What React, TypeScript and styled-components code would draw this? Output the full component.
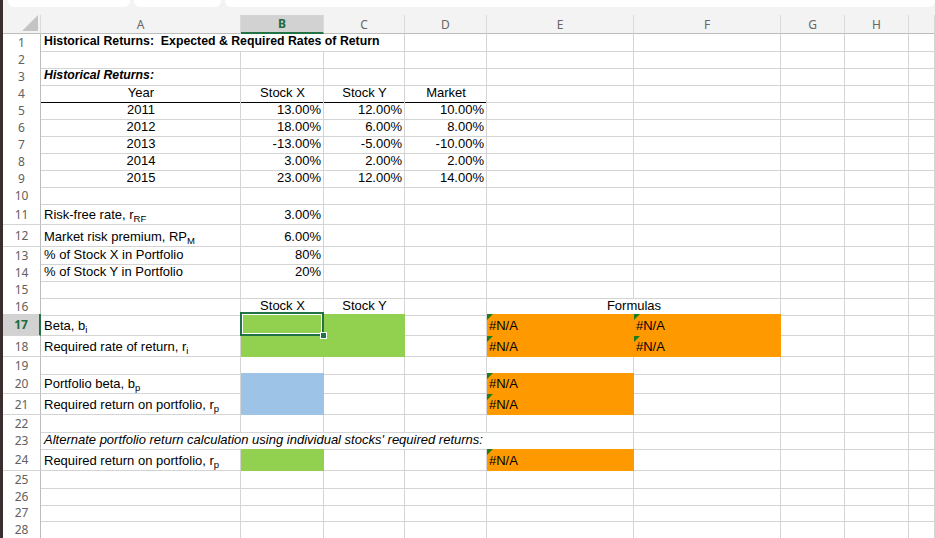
import React from 'react';
import styled, { createGlobalStyle, css } from 'styled-components';

const GRID = '#d4d4d4';
const SEL = '#217346';
const GREEN = '#92d050';
const ORANGE = '#ff9900';
const BLUE = '#9dc3e6';
const COLS = '38px 200px 83px 81px 82px 147px 147px 64px 64px 1fr';

const Global = createGlobalStyle`
  html, body { margin: 0; padding: 0; background: #fff; overflow: hidden; }
  body { font-family: "Liberation Sans", Arial, sans-serif; }
`;

const Window = styled.div`
  display: flex;
  width: 935px;
  height: 538px;
  overflow: hidden;
`;

const Edge = styled.div`
  width: 3px;
  flex: none;
  background: #3b2e2e;
`;

const Sheet = styled.div`
  flex: 1;
  min-width: 0;
  display: flex;
  flex-direction: column;
`;

const TopStrip = styled.div`
  height: 15px;
  flex: none;
  background: #f3f3f3;
  display: flex;
  gap: 4px;
  padding-left: 5px;
  align-items: flex-start;
`;

const Tab = styled.div<{ $w?: number }>`
  height: 7px;
  background: #fff;
  border-radius: 0 0 6px 6px;
  ${p => (p.$w ? css`width: ${p.$w}px; flex: none;` : css`flex: 1;`)}
`;

const HeaderRow = styled.div`
  display: grid;
  grid-template-columns: ${COLS};
  height: 19px;
  flex: none;
  background: #f3f3f3;
`;

const ColHead = styled.div<{ $sel?: boolean }>`
  box-sizing: border-box;
  display: flex;
  align-items: center;
  justify-content: center;
  border-right: 1px solid #dadada;
  border-bottom: 1px solid #bdbdbd;
  font-family: "Noto Sans", "Open Sans", sans-serif;
  font-size: 12px;
  color: #666;
  ${p =>
    p.$sel &&
    css`
      background: #d2d2d2;
      color: #1e6b3f;
      font-weight: bold;
      border-bottom: 2px solid ${SEL};
    `}
`;

const Corner = styled(ColHead)`
  justify-content: flex-end;
  align-items: flex-end;
  padding: 0 2px 2px 0;
`;

const Row = styled.div<{ $h: number }>`
  display: grid;
  grid-template-columns: ${COLS};
  height: ${p => p.$h}px;
  flex: none;
`;

const RowHead = styled.div<{ $sel?: boolean }>`
  box-sizing: border-box;
  display: flex;
  align-items: center;
  justify-content: center;
  border-right: 1px solid #bdbdbd;
  border-bottom: 1px solid ${GRID};
  font-family: "Noto Sans", "Open Sans", sans-serif;
  font-size: 12px;
  color: #616161;
  background: #fff;
  ${p =>
    p.$sel &&
    css`
      background: #d2d2d2;
      color: #1e6b3f;
      font-weight: bold;
      border-right: 2px solid ${SEL};
    `}
`;

type Align = 'l' | 'r' | 'c';

const Cell = styled.div<{
  $a: Align;
  $span: number;
  $fill?: string;
  $b?: boolean;
  $i?: boolean;
  $line?: boolean;
  $sz?: number;
  $err?: boolean;
  $sel?: boolean;
}>`
  grid-column: span ${p => p.$span};
  position: relative;
  box-sizing: border-box;
  min-width: 0;
  display: flex;
  align-items: flex-end;
  justify-content: ${p => (p.$a === 'r' ? 'flex-end' : p.$a === 'c' ? 'center' : 'flex-start')};
  padding: 0 2px 2px 3px;
  border-right: 1px solid ${p => p.$fill || GRID};
  border-bottom: 1px solid ${p => (p.$line ? '#000' : p.$fill || GRID)};
  background: ${p => p.$fill || 'transparent'};
  white-space: pre;
  font-size: ${p => p.$sz || 13}px;
  line-height: 15px;
  color: #000;
  font-weight: ${p => (p.$b ? 'bold' : 'normal')};
  font-style: ${p => (p.$i ? 'italic' : 'normal')};
  ${p =>
    p.$err &&
    css`
      padding-left: 2px;
      &::before {
        content: '';
        position: absolute;
        top: 0;
        left: 0;
        width: 0;
        height: 0;
        border-top: 6px solid #1e7b1e;
        border-right: 6px solid transparent;
      }
    `}
  ${p =>
    p.$sel &&
    css`
      &::before {
        content: '';
        position: absolute;
        top: -2px;
        left: -1px;
        right: -1px;
        bottom: -1px;
        border: 2px solid ${SEL};
        box-shadow: inset 0 0 0 1px #fff;
        z-index: 2;
      }
      &::after {
        content: '';
        position: absolute;
        right: -4px;
        bottom: -4px;
        width: 5px;
        height: 5px;
        background: ${SEL};
        border: 1px solid #fff;
        z-index: 3;
      }
    `}
`;

const Sub = styled.span`
  font-size: 9.5px;
  vertical-align: -3px;
  line-height: 0;
`;

type CellDef = {
  c: number;
  span?: number;
  v?: React.ReactNode;
  a?: Align;
  fill?: string;
  b?: boolean;
  i?: boolean;
  line?: boolean;
  err?: boolean;
  sel?: boolean;
  sz?: number;
};

type RowDef = { n: number; h: number; sel?: boolean; cells: CellDef[] };

const years: [string, string, string, string][] = [
  ['2011', '13.00%', '12.00%', '10.00%'],
  ['2012', '18.00%', '6.00%', '8.00%'],
  ['2013', '-13.00%', '-5.00%', '-10.00%'],
  ['2014', '3.00%', '2.00%', '2.00%'],
  ['2015', '23.00%', '12.00%', '14.00%'],
];

const label = (t: string, s: string) => (
  <span>
    {t}
    <Sub>{s}</Sub>
  </span>
);

const na = (c: number): CellDef => ({ c, v: '#N/A', fill: ORANGE, err: true });

const ROWS: RowDef[] = [
  {
    n: 1,
    h: 17,
    cells: [{ c: 1, span: 3, v: 'Historical Returns:  Expected & Required Rates of Return', b: true, sz: 12.3 }],
  },
  { n: 2, h: 17, cells: [] },
  { n: 3, h: 17, cells: [{ c: 1, v: 'Historical Returns:', b: true, i: true, sz: 12.3 }] },
  {
    n: 4,
    h: 17,
    cells: [
      { c: 1, v: 'Year', a: 'c', line: true },
      { c: 2, v: 'Stock X', a: 'c', line: true },
      { c: 3, v: 'Stock Y', a: 'c', line: true },
      { c: 4, v: 'Market', a: 'c', line: true },
    ],
  },
  ...years.map((y, k) => ({
    n: 5 + k,
    h: 17,
    cells: [
      { c: 1, v: y[0], a: 'c' as Align },
      { c: 2, v: y[1], a: 'r' as Align },
      { c: 3, v: y[2], a: 'r' as Align },
      { c: 4, v: y[3], a: 'r' as Align },
    ],
  })),
  { n: 10, h: 17, cells: [] },
  { n: 11, h: 21, cells: [{ c: 1, v: label('Risk-free rate, r', 'RF') }, { c: 2, v: '3.00%', a: 'r' }] },
  { n: 12, h: 22, cells: [{ c: 1, v: label('Market risk premium, RP', 'M') }, { c: 2, v: '6.00%', a: 'r' }] },
  { n: 13, h: 17, cells: [{ c: 1, v: '% of Stock X in Portfolio' }, { c: 2, v: '80%', a: 'r' }] },
  { n: 14, h: 17, cells: [{ c: 1, v: '% of Stock Y in Portfolio' }, { c: 2, v: '20%', a: 'r' }] },
  { n: 15, h: 17, cells: [] },
  {
    n: 16,
    h: 16,
    cells: [
      { c: 2, v: 'Stock X', a: 'c', line: true },
      { c: 3, v: 'Stock Y', a: 'c', line: true },
      { c: 5, span: 2, v: 'Formulas', a: 'c' },
    ],
  },
  {
    n: 17,
    h: 22,
    sel: true,
    cells: [
      { c: 1, v: label('Beta, b', 'i') },
      { c: 2, fill: GREEN, sel: true },
      { c: 3, fill: GREEN },
      na(5),
      na(6),
    ],
  },
  {
    n: 18,
    h: 21,
    cells: [
      { c: 1, v: label('Required rate of return, r', 'i') },
      { c: 2, fill: GREEN },
      { c: 3, fill: GREEN },
      na(5),
      na(6),
    ],
  },
  { n: 19, h: 16, cells: [] },
  { n: 20, h: 21, cells: [{ c: 1, v: label('Portfolio beta, b', 'p') }, { c: 2, fill: BLUE }, na(5)] },
  {
    n: 21,
    h: 21,
    cells: [{ c: 1, v: label('Required return on portfolio, r', 'p') }, { c: 2, fill: BLUE }, na(5)],
  },
  { n: 22, h: 17, cells: [] },
  {
    n: 23,
    h: 17,
    cells: [
      {
        c: 1,
        span: 5,
        v: "Alternate portfolio return calculation using individual stocks' required returns:",
        i: true,
      },
    ],
  },
  {
    n: 24,
    h: 22,
    cells: [{ c: 1, v: label('Required return on portfolio, r', 'p') }, { c: 2, fill: GREEN }, na(5)],
  },
  { n: 25, h: 17, cells: [] },
  { n: 26, h: 16, cells: [] },
  { n: 27, h: 17, cells: [] },
  { n: 28, h: 17, cells: [] },
];

const LETTERS = ['A', 'B', 'C', 'D', 'E', 'F', 'G', 'H', ''];
const NCOLS = 9;

function renderCells(defs: CellDef[]) {
  const out: React.ReactNode[] = [];
  let c = 1;
  while (c <= NCOLS) {
    const d = defs.find(x => x.c === c);
    if (d) {
      const span = d.span || 1;
      out.push(
        <Cell
          key={c}
          $a={d.a || 'l'}
          $span={span}
          $fill={d.fill}
          $b={d.b}
          $i={d.i}
          $line={d.line}
          $sz={d.sz}
          $err={d.err}
          $sel={d.sel}
        >
          {d.v}
        </Cell>
      );
      c += span;
    } else {
      out.push(<Cell key={c} $a="l" $span={1} />);
      c += 1;
    }
  }
  return out;
}

export default function App() {
  return (
    <>
      <Global />
      <Window>
        <Edge />
        <Sheet>
          <TopStrip>
            <Tab $w={122} />
            <Tab $w={87} />
            <Tab />
          </TopStrip>
          <HeaderRow>
            <Corner>
              <svg width="16" height="16" viewBox="0 0 16 16">
                <polygon points="16,0 16,16 0,16" fill="#c4c4c4" />
              </svg>
            </Corner>
            {LETTERS.map((l, k) => (
              <ColHead key={k} $sel={l === 'B'}>
                {l}
              </ColHead>
            ))}
          </HeaderRow>
          {ROWS.map(r => (
            <Row key={r.n} $h={r.h}>
              <RowHead $sel={r.sel}>{r.n}</RowHead>
              {renderCells(r.cells)}
            </Row>
          ))}
        </Sheet>
      </Window>
    </>
  );
}
